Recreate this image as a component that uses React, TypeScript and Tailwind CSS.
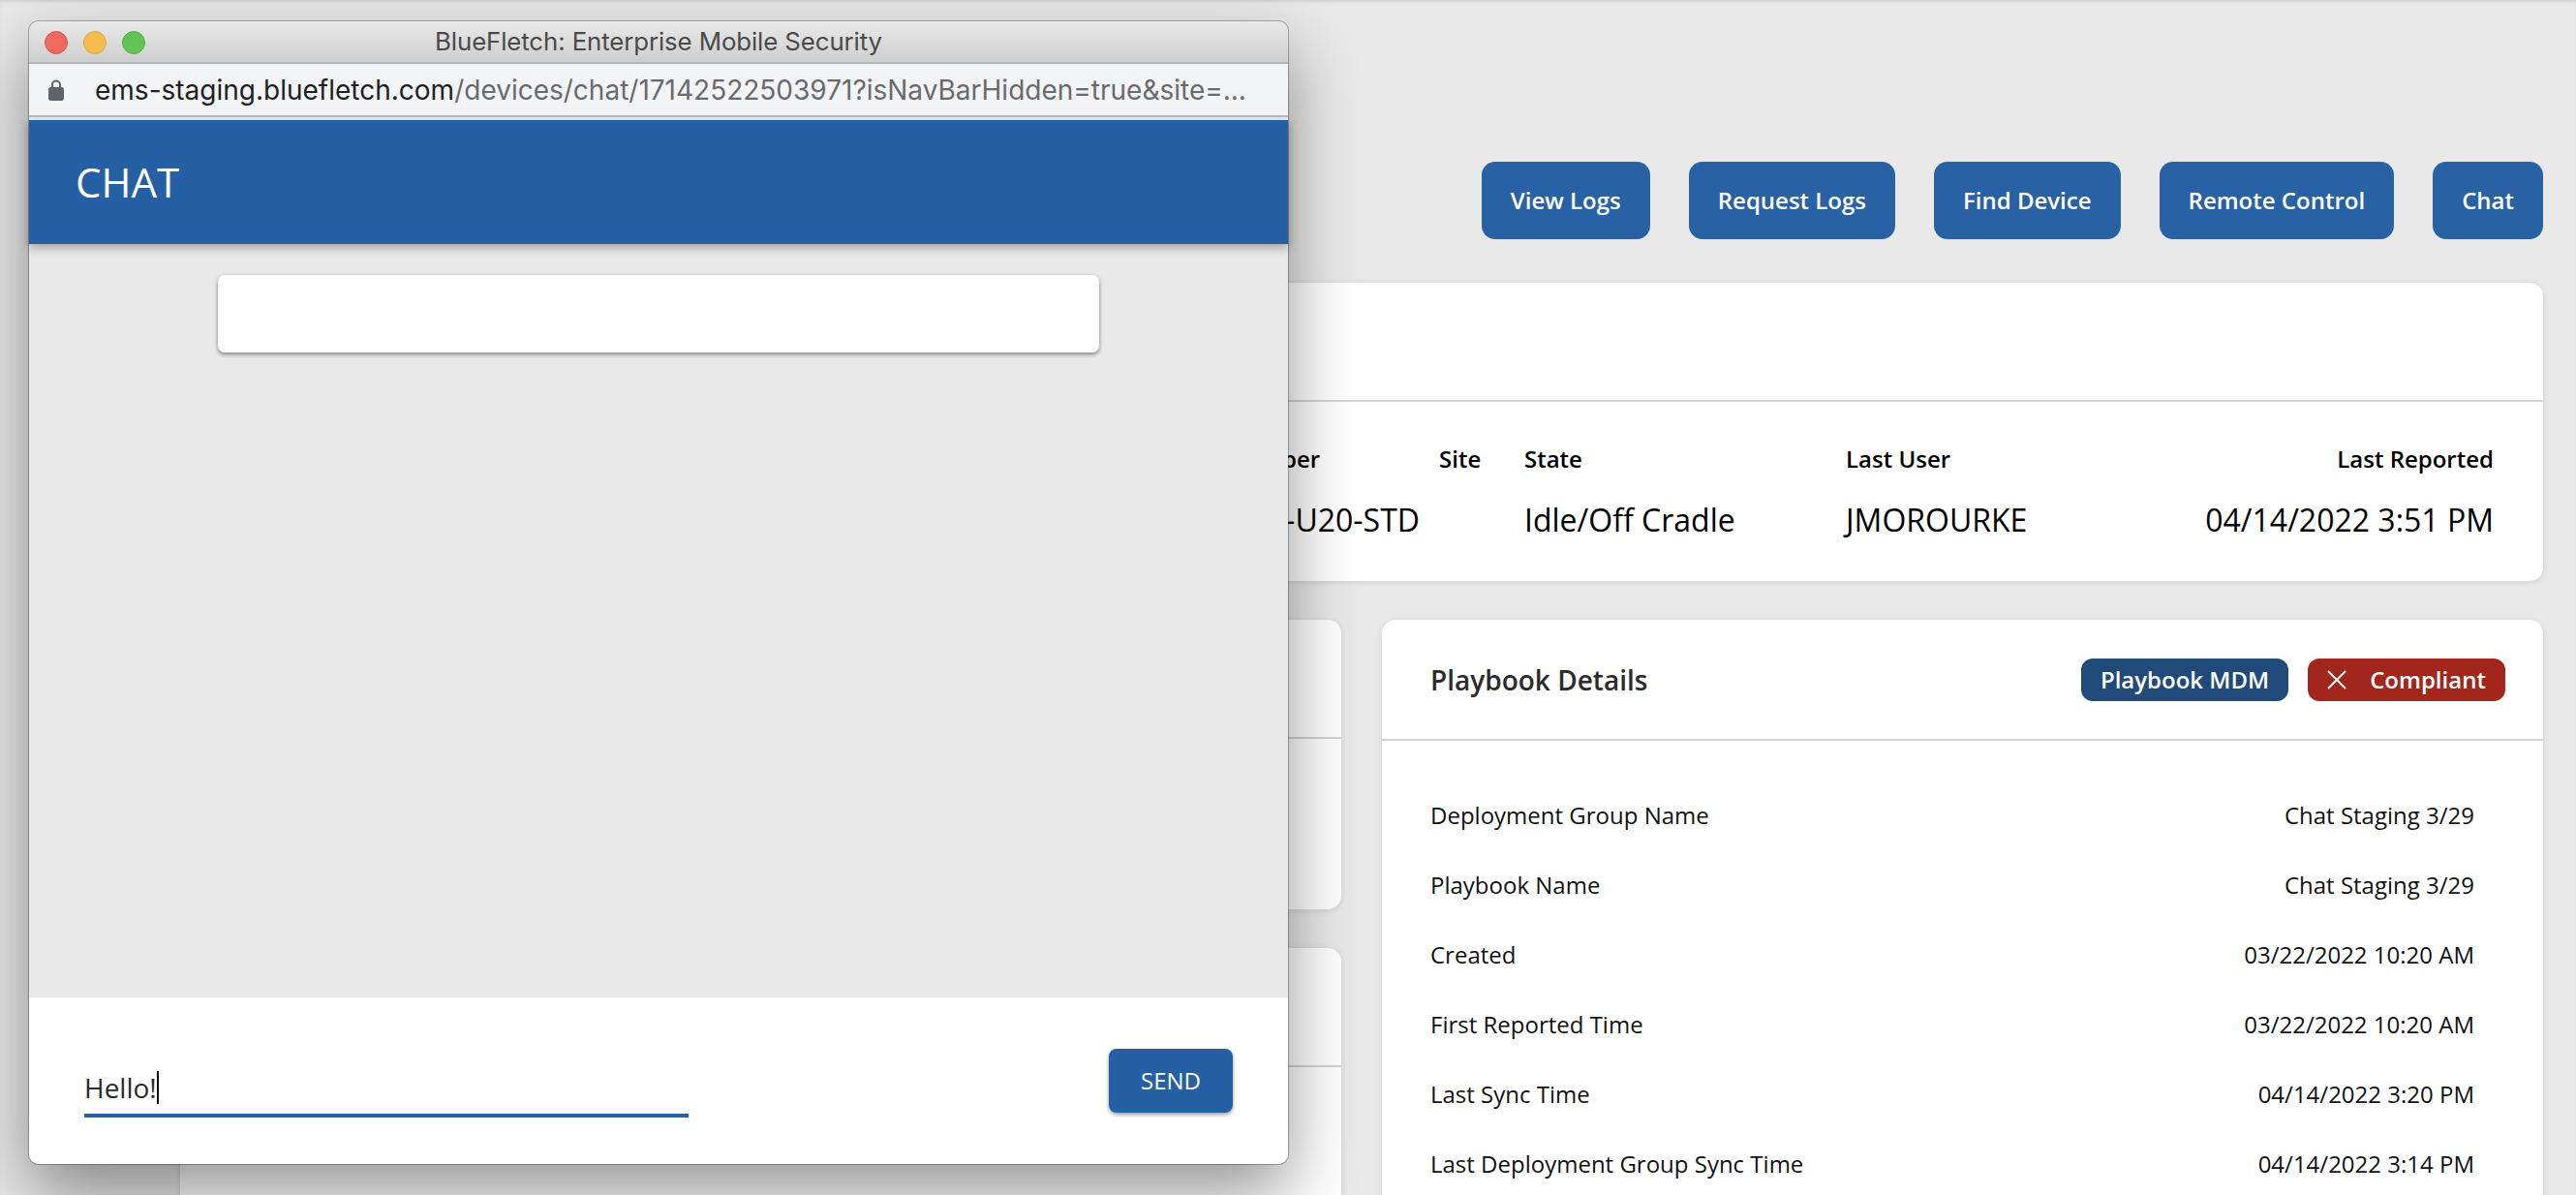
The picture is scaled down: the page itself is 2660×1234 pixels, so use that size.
const actions = ["View Logs", "Request Logs", "Find Device", "Remote Control", "Chat"];

const playbookRows = [
  ["Deployment Group Name", "Chat Staging 3/29"],
  ["Playbook Name", "Chat Staging 3/29"],
  ["Created", "03/22/2022 10:20 AM"],
  ["First Reported Time", "03/22/2022 10:20 AM"],
  ["Last Sync Time", "04/14/2022 3:20 PM"],
  ["Last Deployment Group Sync Time", "04/14/2022 3:14 PM"],
];

function ChatWindow() {
  return (
    <div className="absolute left-[30px] top-[22px] w-[1300px] h-[1180px] flex flex-col rounded-[10px] shadow-[0_0_0_1px_rgba(0,0,0,0.28),0_30px_70px_rgba(0,0,0,0.42)]">
      {/* title bar */}
      <div className="relative h-[44px] shrink-0 flex items-center justify-center rounded-t-[10px] border-b-2 border-[#b5b5b5] bg-gradient-to-b from-[#e9e9e9] to-[#cfcfcf]">
        <div className="absolute left-[16px] top-[10px] flex gap-[16px]">
          <div className="w-[24px] h-[24px] rounded-full bg-[#ee6a5f] border border-[#d9574d]" />
          <div className="w-[24px] h-[24px] rounded-full bg-[#f5bd4f] border border-[#dea53c]" />
          <div className="w-[24px] h-[24px] rounded-full bg-[#61c454] border border-[#52ad46]" />
        </div>
        <span className="font-['Inter',sans-serif] text-[25.8px] text-[#4a4a4a] tracking-[-0.1px]">
          BlueFletch: Enterprise Mobile Security
        </span>
      </div>

      {/* address bar */}
      <div className="h-[55px] shrink-0 flex items-center pl-[20px] gap-[32px] bg-[#f3f4f6] border-b-2 border-[#b8b8b8] font-['Inter',sans-serif] text-[28px] whitespace-nowrap">
        <svg width="16" height="22" viewBox="0 0 16 22">
          <path d="M4 9V5.5a4 4 0 0 1 8 0V9" fill="none" stroke="#606368" strokeWidth="2" />
          <rect x="0" y="8" width="16" height="14" rx="2.5" fill="#606368" />
        </svg>
        <span className="text-[#1f1f1f]">
          ems-staging.bluefletch.com
          <span className="text-[#6a6a6c]">/devices/chat/17142522503971?isNavBarHidden=true&amp;site=...</span>
        </span>
      </div>
      <div className="h-[3px] shrink-0 bg-[#e8edf4]" />

      {/* app header */}
      <div className="relative z-10 h-[128px] shrink-0 flex items-center pl-[48px] bg-[#2660a4] shadow-[0_4px_10px_rgba(0,0,0,0.3)]">
        <span className="text-[42px] leading-none text-white">CHAT</span>
      </div>

      {/* messages */}
      <div className="h-[778px] shrink-0 pt-[32px] flex justify-center bg-[#e9e9e9]">
        <div className="w-[910px] h-[80px] rounded-[7px] bg-white shadow-[0_2px_4px_rgba(0,0,0,0.45)]" />
      </div>

      {/* composer */}
      <div className="flex-1 flex justify-between pt-[53px] pl-[57px] pr-[57px] bg-white rounded-b-[10px]">
        <div className="w-[624px] h-[71px] flex items-end pb-[10px] border-b-4 border-[#2660a4] text-[28px] leading-[34px] text-[#2a2a2a]">
          <span>Hello!</span>
          <span className="w-[2px] h-[34px] bg-[#111]" />
        </div>
        <button className="w-[128px] h-[66px] rounded-[8px] bg-[#2660a4] text-[24px] text-white shadow-[0_2px_4px_rgba(0,0,0,0.4)]">
          SEND
        </button>
      </div>
    </div>
  );
}

export default function App() {
  return (
    <div className="relative w-[2660px] h-[1234px] overflow-hidden bg-[#e9e9e9] font-['Open_Sans',sans-serif] pl-[186px] pr-[34px] pt-[167px] shadow-[inset_0_3px_3px_-1px_rgba(0,0,0,0.1)]">
      <div className="flex justify-end gap-[40px]">
        {actions.map((a) => (
          <button key={a} className="h-[80px] px-[30px] rounded-[14px] bg-[#2961a5] text-[24px] font-semibold text-white">
            {a}
          </button>
        ))}
      </div>

      {/* device summary */}
      <div className="mt-[45px] h-[308px] rounded-[14px] bg-white shadow-[0_1px_6px_rgba(0,0,0,0.12)]">
        <div className="h-[123px] border-b-2 border-[#cfd6dc]" />
        <div className="flex pt-[42px] pl-[1081px] pr-[51px] text-black">
          <div className="w-[219px] shrink-0">
            <div className="text-[24px] font-semibold leading-[34px]">Number</div>
            <div className="mt-[24px] pr-[20px] text-[32px] leading-[44px] text-right">-U20-STD</div>
          </div>
          <div className="w-[88px] shrink-0">
            <div className="text-[24px] font-semibold leading-[34px]">Site</div>
          </div>
          <div className="w-[332px] shrink-0">
            <div className="text-[24px] font-semibold leading-[34px]">State</div>
            <div className="mt-[24px] text-[32px] leading-[44px]">Idle/Off Cradle</div>
          </div>
          <div className="w-[300px] shrink-0">
            <div className="text-[24px] font-semibold leading-[34px]">Last User</div>
            <div className="mt-[24px] text-[32px] leading-[44px]">JMOROURKE</div>
          </div>
          <div className="flex-1 text-right whitespace-nowrap">
            <div className="text-[24px] font-semibold leading-[34px]">Last Reported</div>
            <div className="mt-[24px] text-[32px] leading-[44px]">04/14/2022 3:51 PM</div>
          </div>
        </div>
      </div>

      <div className="mt-[40px] flex gap-[42px]">
        <div className="w-[1199px] shrink-0 flex flex-col gap-[40px]">
          <div className="h-[299px] rounded-[14px] bg-white shadow-[0_1px_6px_rgba(0,0,0,0.12)]">
            <div className="h-[123px] border-b-2 border-[#cfd6dc]" />
          </div>
          <div className="h-[400px] rounded-[14px] bg-white shadow-[0_1px_6px_rgba(0,0,0,0.12)]">
            <div className="h-[123px] border-b-2 border-[#cfd6dc]" />
          </div>
        </div>

        {/* playbook details */}
        <div className="flex-1 h-[700px] rounded-[14px] bg-white shadow-[0_1px_6px_rgba(0,0,0,0.12)]">
          <div className="h-[125px] flex items-center justify-between pl-[50px] pr-[39px] border-b-2 border-[#cfd6dc]">
            <span className="text-[28px] font-semibold text-[#2b2b2b]">Playbook Details</span>
            <div className="flex gap-[20px]">
              <div className="h-[44px] w-[214px] flex items-center justify-center rounded-[12px] bg-[#1f4a7a] text-[24px] font-semibold text-white">
                Playbook MDM
              </div>
              <div className="h-[44px] w-[204px] flex items-center justify-center gap-[24px] rounded-[12px] bg-[#a3261c] text-[24px] font-semibold text-white">
                <svg width="20" height="20" viewBox="0 0 20 20">
                  <path d="M1 1 19 19M19 1 1 19" stroke="#fff" strokeWidth="2" />
                </svg>
                Compliant
              </div>
            </div>
          </div>
          <div className="pt-[41px] pl-[50px] pr-[71px]">
            {playbookRows.map(([label, value]) => (
              <div key={label} className="h-[72px] flex items-center justify-between text-[24px] text-[#111]">
                <span>{label}</span>
                <span>{value}</span>
              </div>
            ))}
          </div>
        </div>
      </div>

      <ChatWindow />
    </div>
  );
}
